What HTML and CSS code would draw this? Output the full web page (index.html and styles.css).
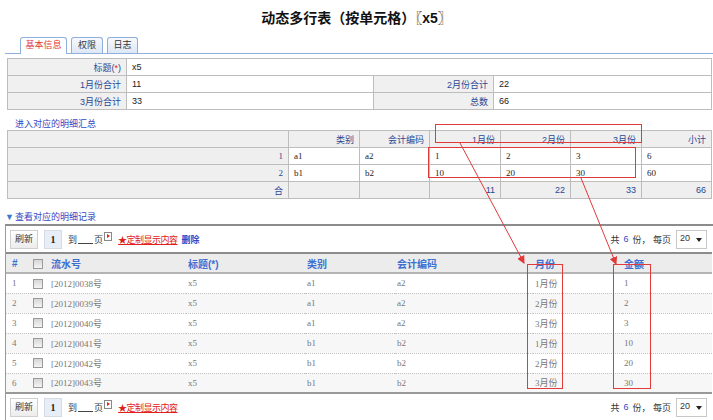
FILE: index.html
```html
<!DOCTYPE html>
<html lang="zh-CN">
<head>
    <meta charset="UTF-8">
    <title>动态多行表（按单元格）</title>
    <link rel="stylesheet" href="styles.css">
</head>
<body>
<div class="page">
    <h1 class="title">动态多行表（按单元格）〖x5〗</h1>

    <!-- Tabs -->
    <div class="tabs">
        <span class="tab tab-basic active">基本信息</span>
        <span class="tab tab-perm">权限</span>
        <span class="tab tab-log">日志</span>
    </div>

    <!-- Basic info form -->
    <table class="form-table">
        <colgroup>
            <col style="width:119px"><col style="width:247px"><col style="width:120px"><col style="width:218px">
        </colgroup>
        <tr>
            <td class="label">标题(<span class="req">*</span>)</td>
            <td class="value" colspan="3">x5</td>
        </tr>
        <tr>
            <td class="label">1月份合计</td>
            <td class="value">11</td>
            <td class="label">2月份合计</td>
            <td class="value">22</td>
        </tr>
        <tr>
            <td class="label">3月份合计</td>
            <td class="value">33</td>
            <td class="label">总数</td>
            <td class="value">66</td>
        </tr>
    </table>

    <!-- Summary -->
    <div class="section-link"><a href="#">进入对应的明细汇总</a></div>
    <table class="sum-table">
        <colgroup>
            <col style="width:281px"><col style="width:71px"><col style="width:70px"><col style="width:71px">
            <col style="width:70px"><col style="width:71px"><col style="width:70px">
        </colgroup>
        <tr class="head">
            <td></td><td>类别</td><td>会计编码</td><td>1月份</td><td>2月份</td><td>3月份</td><td>小计</td>
        </tr>
        <tr>
            <td class="num">1</td><td>a1</td><td>a2</td><td>1</td><td>2</td><td>3</td><td>6</td>
        </tr>
        <tr>
            <td class="num">2</td><td>b1</td><td>b2</td><td>10</td><td>20</td><td>30</td><td>60</td>
        </tr>
        <tr class="total">
            <td>合</td><td></td><td></td><td>11</td><td>22</td><td>33</td><td>66</td>
        </tr>
    </table>

    <!-- Detail records -->
    <div class="toggle"><span class="arrow">▼</span><a href="#">查看对应的明细记录</a></div>
    <div class="grid-panel">
        <div class="toolbar">
            <div class="tools-left">
                <span class="btn">刷新</span>
                <span class="page-no">1</span>
                <span class="goto">到<span class="blank"></span>页<span class="go-icon"></span></span>
                <a class="custom" href="#">★定制显示内容</a>
                <a class="delete" href="#">删除</a>
            </div>
            <div class="tools-right">
                共 <span class="count">6</span> 份， 每页
                <span class="select">20<span class="caret"></span></span>
            </div>
        </div>

        <table class="grid">
            <colgroup>
                <col style="width:25px"><col style="width:18px"><col style="width:137px"><col style="width:119px">
                <col style="width:90px"><col style="width:138px"><col style="width:89px"><col style="width:90px">
            </colgroup>
            <thead>
                <tr>
                    <th>#</th><th><span class="cb"></span></th><th>流水号</th><th>标题(*)</th>
                    <th>类别</th><th>会计编码</th><th>月份</th><th>金额</th>
                </tr>
            </thead>
            <tbody>
                <tr><td>1</td><td><span class="cb"></span></td><td>[2012]0038号</td><td>x5</td><td>a1</td><td>a2</td><td>1月份</td><td>1</td></tr>
                <tr><td>2</td><td><span class="cb"></span></td><td>[2012]0039号</td><td>x5</td><td>a1</td><td>a2</td><td>2月份</td><td>2</td></tr>
                <tr><td>3</td><td><span class="cb"></span></td><td>[2012]0040号</td><td>x5</td><td>a1</td><td>a2</td><td>3月份</td><td>3</td></tr>
                <tr><td>4</td><td><span class="cb"></span></td><td>[2012]0041号</td><td>x5</td><td>b1</td><td>b2</td><td>1月份</td><td>10</td></tr>
                <tr><td>5</td><td><span class="cb"></span></td><td>[2012]0042号</td><td>x5</td><td>b1</td><td>b2</td><td>2月份</td><td>20</td></tr>
                <tr><td>6</td><td><span class="cb"></span></td><td>[2012]0043号</td><td>x5</td><td>b1</td><td>b2</td><td>3月份</td><td>30</td></tr>
            </tbody>
        </table>

        <div class="toolbar">
            <div class="tools-left">
                <span class="btn">刷新</span>
                <span class="page-no">1</span>
                <span class="goto">到<span class="blank"></span>页<span class="go-icon"></span></span>
                <a class="custom" href="#">★定制显示内容</a>
            </div>
            <div class="tools-right">
                共 <span class="count">6</span> 份， 每页
                <span class="select">20<span class="caret"></span></span>
            </div>
        </div>
    </div>

    <!-- Red annotations drawn over the page -->
    <svg class="marks" width="713" height="420" viewBox="0 0 713 420">
        <defs>
            <marker id="tip" markerWidth="8" markerHeight="8" refX="7" refY="4" orient="auto" markerUnits="userSpaceOnUse">
                <path d="M0,0 L8,4 L0,8 Z" fill="#e03a3a"/>
            </marker>
        </defs>
        <g fill="none" stroke="#e03a3a" stroke-width="1">
            <rect x="435.5" y="124.5" width="206" height="18"/>
            <rect x="428.5" y="147.5" width="207" height="30"/>
            <rect x="527.5" y="264.5" width="35" height="124"/>
            <rect x="613.5" y="264.5" width="37" height="124"/>
            <line x1="460" y1="143" x2="524" y2="263" marker-end="url(#tip)"/>
            <line x1="581" y1="178" x2="616" y2="264" marker-end="url(#tip)"/>
        </g>
    </svg>
</div>
</body>
</html>
```

FILE: styles.css
```css
* {
    margin: 0;
    padding: 0;
    box-sizing: border-box;
}

body {
    background: #fff;
    font-family: "Liberation Sans", "Noto Sans CJK SC", sans-serif;
    font-size: 9px;
    color: #222;
}

a {
    text-decoration: none;
}

.page {
    position: relative;
    width: 713px;
    height: 420px;
    overflow: hidden;
}

.title {
    height: 36px;
    line-height: 36px;
    text-align: center;
    font-size: 14px;
    font-weight: bold;
    color: #111;
}

/* Tabs */
.tabs {
    display: flex;
    align-items: flex-end;
    gap: 4px;
    height: 18px;
    margin-left: 5px;
    padding-left: 15px;
    border-bottom: 1px solid #8fb0dc;
}

.tab {
    height: 16px;
    line-height: 15px;
    text-align: center;
    border: 1px solid #8fb0dc;
    border-bottom: none;
    border-radius: 3px 3px 0 0;
    background: linear-gradient(#f7f9fd, #dde7f5);
    color: #333;
}

.tab.active {
    height: 17px;
    margin-bottom: -1px;
    background: #fff;
    color: #e23a3a;
}

.tab-basic { width: 47px; }
.tab-perm { width: 32px; }
.tab-log { width: 31px; }

/* Bordered form tables */
.form-table,
.sum-table {
    width: 704px;
    margin-left: 7px;
    border-collapse: collapse;
    table-layout: fixed;
    border: 1px solid #a8a8a8;
}

.form-table {
    margin-top: 4px;
}

.form-table td,
.sum-table td {
    height: 17px;
    padding: 0 5px;
    border: 1px solid #bdbdbd;
    white-space: nowrap;
}

.form-table .label {
    background: #f0f0f0;
    text-align: right;
    color: #2a4894;
}

.req {
    color: #e02020;
}

.section-link {
    height: 20px;
    padding: 9px 0 0 15px;
    line-height: 11px;
}

.section-link a,
.toggle a {
    color: #3348c4;
}

.sum-table td {
    font-family: "Liberation Serif", "Noto Sans CJK SC", serif;
}

.sum-table .head td,
.sum-table .total td {
    background: #efefef;
    text-align: right;
    color: #2a4894;
    font-family: "Liberation Sans", "Noto Sans CJK SC", sans-serif;
}

.sum-table td.num {
    background: #efefef;
    text-align: right;
    color: #2a4894;
}

.toggle {
    height: 25px;
    padding: 13px 0 0 5px;
    line-height: 11px;
}

.toggle .arrow {
    color: #3b78c8;
    font-size: 9px;
    margin-right: 1px;
}

/* Detail grid */
.grid-panel {
    margin-left: 5px;
    border-left: 1px solid #9a9a9a;
    border-top: 2px solid #8c8c8c;
}

.toolbar {
    display: flex;
    justify-content: space-between;
    align-items: center;
    height: 26px;
    padding: 0 6px 0 4px;
}

.tools-left,
.tools-right {
    display: flex;
    align-items: center;
    gap: 6px;
}

.tools-right {
    gap: 4px;
    color: #333;
}

.btn {
    width: 28px;
    height: 19px;
    line-height: 17px;
    text-align: center;
    border: 1px solid #cfcfcf;
    background: linear-gradient(#ffffff, #ececec);
    color: #333;
}

.page-no {
    width: 18px;
    height: 19px;
    line-height: 17px;
    text-align: center;
    border: 1px solid #d4dbe6;
    background: #e8eef7;
    font-family: "Liberation Serif", serif;
    font-weight: bold;
    font-size: 10px;
}

.goto {
    display: flex;
    align-items: center;
    color: #333;
}

.blank {
    display: inline-block;
    width: 15px;
    height: 9px;
    margin: 0 1px;
    border-bottom: 1px solid #444;
}

.go-icon {
    position: relative;
    display: inline-block;
    width: 8px;
    height: 9px;
    margin: -5px 0 0 1px;
    border: 1px solid #888;
    background: #fff;
}

.go-icon::after {
    content: "";
    position: absolute;
    left: 2px;
    top: 1px;
    border-left: 3px solid #e02020;
    border-top: 2.5px solid transparent;
    border-bottom: 2.5px solid transparent;
}

.custom {
    color: #e02020;
    text-decoration: underline;
    letter-spacing: -0.5px;
}

.delete {
    margin-left: -2px;
    color: #3348c4;
    font-weight: bold;
}

.count {
    color: #3348c4;
}

.select {
    position: relative;
    width: 31px;
    height: 19px;
    line-height: 15px;
    padding-left: 3px;
    margin-left: 1px;
    border: 1px solid #c8c8c8;
    background: #fff;
    font-size: 9px;
}

.caret {
    position: absolute;
    right: 4px;
    top: 7px;
    border-top: 4px solid #222;
    border-left: 3px solid transparent;
    border-right: 3px solid transparent;
}

.grid {
    width: 706px;
    border-collapse: collapse;
    table-layout: fixed;
    border-bottom: 2px solid #999;
}

.grid th {
    height: 20px;
    padding-left: 2px;
    text-align: left;
    font-size: 10px;
    color: #3f6fd0;
    background: #ececec;
    border-top: 2px solid #8c8c8c;
    border-bottom: 2px solid #b4b4b4;
}

.grid td {
    height: 20px;
    padding-left: 2px;
    color: #777;
    font-family: "Liberation Serif", "Noto Sans CJK SC", serif;
    border-bottom: 1px dotted #c4c4c4;
}

.grid th:first-child,
.grid td:first-child {
    padding-left: 6px;
}

.grid tbody tr:nth-child(even) td {
    background: #f7f7f7;
}

.grid tbody tr:last-child td {
    border-bottom: none;
}

.cb {
    display: inline-block;
    width: 10px;
    height: 10px;
    vertical-align: middle;
    border: 1px solid #9a9a9a;
    background: linear-gradient(#d6d6d6, #f4f4f4);
}

.marks {
    position: absolute;
    left: 0;
    top: 0;
    pointer-events: none;
}
```
